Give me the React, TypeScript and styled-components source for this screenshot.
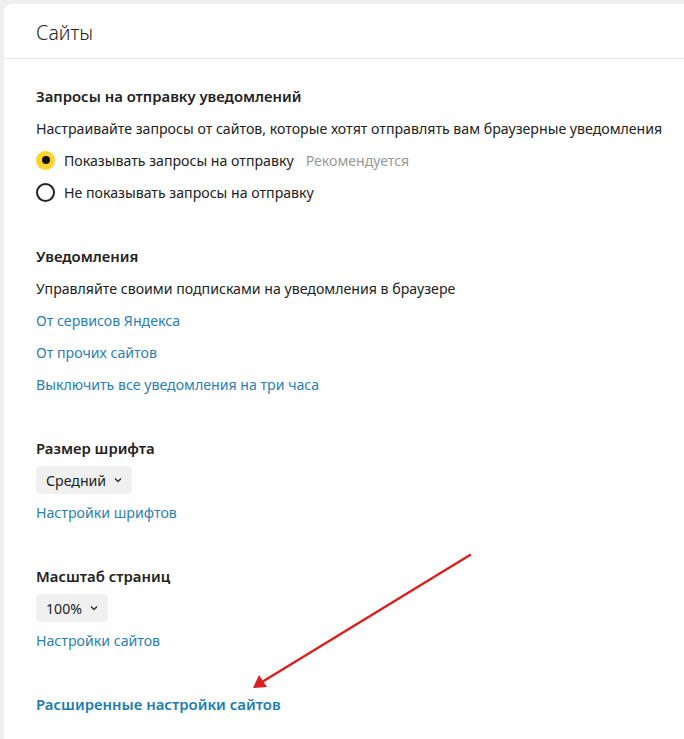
import React from "react";
import styled, { createGlobalStyle } from "styled-components";

const Global = createGlobalStyle`
  html, body { margin: 0; padding: 0; background: #efefef; }
  body { font-family: "Noto Sans", "Open Sans", Arial, sans-serif; color: #222; }
`;

const Page = styled.div`
  position: relative;
  width: 684px;
  height: 739px;
  overflow: hidden;
  padding: 4px 0 0 4px;
  box-sizing: border-box;
`;

const Card = styled.div`
  background: #fff;
  border-top-left-radius: 8px;
  height: 760px;
`;

const Header = styled.div`
  height: 55px;
  display: flex;
  align-items: center;
  padding: 3px 0 0 32px;
  border-bottom: 1px solid #e6e6e6;
  font-size: 19.5px;
  font-weight: 300;
  color: #222;
  box-sizing: border-box;
`;

const Body = styled.div`
  padding: 21px 0 0 32px;
  display: flex;
  flex-direction: column;
  gap: 32px;
`;

const Section = styled.section`
  display: flex;
  flex-direction: column;
`;

const Row = styled.div`
  height: 32px;
  display: flex;
  align-items: center;
  font-size: 14.15px;
  white-space: nowrap;
`;

const Title = styled(Row)`
  font-weight: 600;
  font-size: 14.85px;
`;

const Link = styled.a<{ $strong?: boolean }>`
  color: ${(p) => (p.$strong ? "#1b7cb3" : "#2a7fb6")};
  font-weight: ${(p) => (p.$strong ? 600 : 400)};
  font-size: ${(p) => (p.$strong ? "14.9px" : "14.15px")};
  text-decoration: none;
  cursor: pointer;
`;

const RadioLabel = styled.label`
  display: flex;
  align-items: center;
  gap: 9px;
`;

const RadioCircle = styled.span<{ $checked?: boolean }>`
  width: 19px;
  height: 19px;
  box-sizing: border-box;
  border-radius: 50%;
  display: inline-flex;
  align-items: center;
  justify-content: center;
  background: ${(p) => (p.$checked ? "#fed42b" : "#fff")};
  border: ${(p) => (p.$checked ? "none" : "2px solid #222")};
  &::after {
    content: "";
    display: ${(p) => (p.$checked ? "block" : "none")};
    width: 8px;
    height: 8px;
    border-radius: 50%;
    background: #111;
  }
`;

const Hint = styled.span`
  color: #999;
  margin-left: 12px;
`;

const Select = styled.button`
  height: 28px;
  display: inline-flex;
  align-items: center;
  gap: 8px;
  padding: 0 10px;
  border: none;
  border-radius: 4px;
  background: #f0f0f0;
  font-family: inherit;
  font-size: 14.15px;
  color: #222;
`;

const SelectRow = styled.div`
  height: 32px;
  display: flex;
  align-items: center;
`;

const Arrow = styled.svg`
  position: absolute;
  left: 0;
  top: 0;
  pointer-events: none;
`;

const Chevron = () => (
  <svg width="8" height="6" viewBox="0 0 8 6">
    <path d="M1 1.5 L4 4.5 L7 1.5" fill="none" stroke="#333" strokeWidth="1.5" />
  </svg>
);

export default function App() {
  return (
    <>
      <Global />
      <Page>
        <Card>
          <Header>Сайты</Header>
          <Body>
            <Section>
              <Title>Запросы на отправку уведомлений</Title>
              <Row>Настраивайте запросы от сайтов, которые хотят отправлять вам браузерные уведомления</Row>
              <Row>
                <RadioLabel>
                  <RadioCircle $checked />
                  Показывать запросы на отправку
                </RadioLabel>
                <Hint>Рекомендуется</Hint>
              </Row>
              <Row>
                <RadioLabel>
                  <RadioCircle />
                  Не показывать запросы на отправку
                </RadioLabel>
              </Row>
            </Section>
            <Section>
              <Title>Уведомления</Title>
              <Row>Управляйте своими подписками на уведомления в браузере</Row>
              <Row><Link>От сервисов Яндекса</Link></Row>
              <Row><Link>От прочих сайтов</Link></Row>
              <Row><Link>Выключить все уведомления на три часа</Link></Row>
            </Section>
            <Section>
              <Title>Размер шрифта</Title>
              <SelectRow>
                <Select>Средний <Chevron /></Select>
              </SelectRow>
              <Row><Link>Настройки шрифтов</Link></Row>
            </Section>
            <Section>
              <Title>Масштаб страниц</Title>
              <SelectRow>
                <Select>100% <Chevron /></Select>
              </SelectRow>
              <Row><Link>Настройки сайтов</Link></Row>
            </Section>
            <Section>
              <Row><Link $strong>Расширенные настройки сайтов</Link></Row>
            </Section>
          </Body>
        </Card>
        <Arrow width="684" height="739" viewBox="0 0 684 739">
          <line x1="470" y1="555" x2="262" y2="682" stroke="#d9201e" strokeWidth="2.5" strokeLinecap="round" />
          <polygon points="253,688 259,675 267,687" fill="#d9201e" />
        </Arrow>
      </Page>
    </>
  );
}
